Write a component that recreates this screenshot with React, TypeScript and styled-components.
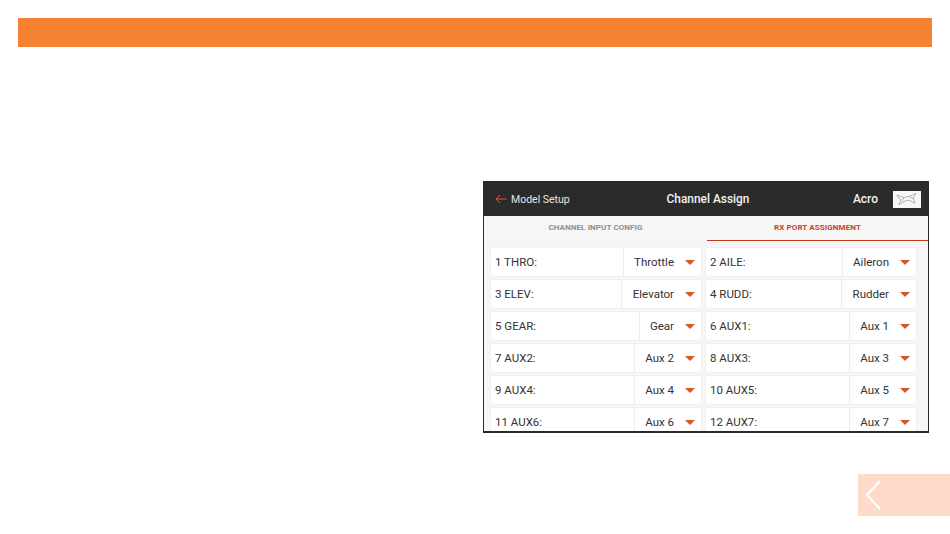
import React from "react";
import styled, { createGlobalStyle } from "styled-components";

const Global = createGlobalStyle`
  html, body { margin: 0; padding: 0; background: #fff; }
  body { width: 950px; height: 534px; overflow: hidden; font-family: Roboto, "Liberation Sans", sans-serif; }
`;

const Page = styled.div`
  width: 950px;
  height: 534px;
  display: flex;
  flex-direction: column;
  padding-top: 18px;
  box-sizing: border-box;
`;

const Banner = styled.div`
  height: 29px;
  margin: 0 18px;
  background: #f58233;
  flex: none;
`;

const Screen = styled.div`
  width: 446px;
  height: 252px;
  margin: 134px 0 0 483px;
  box-sizing: border-box;
  border: 1px solid #2a2a2a;
  border-bottom-width: 2px;
  background: #f6f6f6;
  overflow: hidden;
  flex: none;
`;

const Header = styled.div`
  height: 34px;
  background: #2b2b2b;
  color: #f2f2f2;
  display: grid;
  grid-template-columns: 1fr auto 1fr;
  align-items: center;
  padding: 0 7px 0 11px;
`;

const Back = styled.div`
  display: flex;
  align-items: center;
  gap: 4px;
  font-size: 10.5px;
  color: #e6e6e6;
`;

const Title = styled.div`
  font-size: 11.9px;
  font-weight: 500;
`;

const ModelArea = styled.div`
  display: flex;
  align-items: center;
  justify-content: flex-end;
  gap: 15px;
  font-size: 12px;
  font-weight: 500;
`;

const ModelThumb = styled.div`
  width: 28px;
  height: 17px;
  background: #f7f7f7;
  display: flex;
  align-items: center;
  justify-content: center;
`;

const Tabs = styled.div`
  height: 25px;
  display: grid;
  grid-template-columns: 223px 1fr;
  background: #f6f6f6;
`;

const Tab = styled.div<{ $active?: boolean }>`
  display: flex;
  align-items: center;
  justify-content: center;
  padding-bottom: 2px;
  box-sizing: border-box;
  font-size: 8px;
  font-weight: 700;
  letter-spacing: 0.1px;
  color: ${(p) => (p.$active ? "#c2451e" : "#8e8e8e")};
  border-bottom: 1px solid ${(p) => (p.$active ? "#c4391d" : "transparent")};
`;

const Grid = styled.div`
  display: grid;
  grid-template-columns: 210px 210px;
  column-gap: 5px;
  row-gap: 4px;
  padding: 7px 0 0 7px;
`;

const Cell = styled.div`
  height: 28px;
  background: #fff;
  box-shadow: 0 0 1px #d8d8d8;
  display: flex;
  align-items: center;
  font-size: 11.5px;
  color: #333;
`;

const Label = styled.div`
  flex: 1;
  padding-left: 4px;
`;

const Select = styled.div<{ $width: number }>`
  width: ${(p) => p.$width}px;
  height: 100%;
  box-sizing: border-box;
  border-left: 1px solid #ececec;
  display: flex;
  align-items: center;
  justify-content: flex-end;
  gap: 11px;
  padding: 0 6px 0 0;
`;

const Caret = styled.span`
  width: 0;
  height: 0;
  border-left: 5px solid transparent;
  border-right: 5px solid transparent;
  border-top: 5px solid #cf5a26;
`;

const Footer = styled.div`
  flex: none;
  align-self: flex-end;
  width: 92px;
  height: 42px;
  margin-top: 41px;
  background: #fddbc8;
  display: flex;
  align-items: center;
  padding-left: 6px;
  box-sizing: border-box;
`;

const rows: [string, string, number][] = [
  ["1 THRO:", "Throttle", 78],
  ["2 AILE:", "Aileron", 74],
  ["3 ELEV:", "Elevator", 80],
  ["4 RUDD:", "Rudder", 75],
  ["5 GEAR:", "Gear", 62],
  ["6 AUX1:", "Aux 1", 67],
  ["7 AUX2:", "Aux 2", 67],
  ["8 AUX3:", "Aux 3", 67],
  ["9 AUX4:", "Aux 4", 67],
  ["10 AUX5:", "Aux 5", 67],
  ["11 AUX6:", "Aux 6", 67],
  ["12 AUX7:", "Aux 7", 67],
];

export default function App() {
  return (
    <Page>
      <Global />
      <Banner />
      <Screen>
        <Header>
          <Back>
            <svg width="12" height="10" viewBox="0 0 12 10" fill="none" stroke="#e2582a" strokeWidth="1">
              <path d="M11.5 5H1M5 1L1 5l4 4" />
            </svg>
            Model Setup
          </Back>
          <Title>Channel Assign</Title>
          <ModelArea>
            Acro
            <ModelThumb>
              <svg width="24" height="14" viewBox="0 0 24 14" fill="none" stroke="#a0a0a0" strokeWidth="0.8">
                <path d="M2 3l7 2.5 5-1 7-3-3 4.5 2 5.5-6-3.5-4 1-6 3.5 2-5-3-2z" />
                <path d="M9 5.5L7 9M14 4.5l4 2" />
              </svg>
            </ModelThumb>
          </ModelArea>
        </Header>
        <Tabs>
          <Tab>CHANNEL INPUT CONFIG</Tab>
          <Tab $active>RX PORT ASSIGNMENT</Tab>
        </Tabs>
        <Grid>
          {rows.map(([label, value, width]) => (
            <Cell key={label}>
              <Label>{label}</Label>
              <Select $width={width}>
                {value}
                <Caret />
              </Select>
            </Cell>
          ))}
        </Grid>
      </Screen>
      <Footer>
        <svg width="20" height="32" viewBox="0 0 20 32" fill="none" stroke="#fff" strokeWidth="2.2">
          <path d="M16 2L3 16l13 14" />
        </svg>
      </Footer>
    </Page>
  );
}
